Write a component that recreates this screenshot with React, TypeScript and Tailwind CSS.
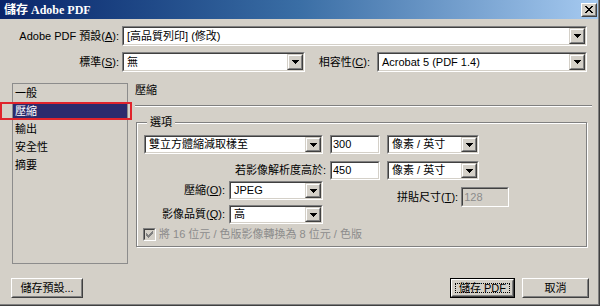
import React from "react";

const Arrow = () => (
  <svg width="7" height="4" viewBox="0 0 7 4" shapeRendering="crispEdges">
    <path d="M0 0h7v1h-1v1h-1v1h-1v1h-1v-1h-1v-1h-1v-1h-1z" fill="#000" />
  </svg>
);

const DropBtn = () => (
  <div className="w-[16px] h-full border border-t-[#d4d0c8] border-l-[#d4d0c8] border-b-[#404040] border-r-[#404040] shrink-0">
    <div className="w-full h-full border border-t-white border-l-white border-b-[#808080] border-r-[#808080] bg-[#d4d0c8] flex items-center justify-center">
      <Arrow />
    </div>
  </div>
);

const Sunken = ({
  className,
  children,
  disabled,
}: {
  className: string;
  children?: React.ReactNode;
  disabled?: boolean;
}) => (
  <div
    className={`${className} flex border border-t-[#808080] border-l-[#808080] border-b-white border-r-white shrink-0`}
  >
    <div
      className={`flex-1 min-w-0 flex border border-t-[#404040] border-l-[#404040] border-b-[#d4d0c8] border-r-[#d4d0c8] ${
        disabled ? "bg-[#d4d0c8]" : "bg-white"
      }`}
    >
      {children}
    </div>
  </div>
);

const Combo = ({ className, text }: { className: string; text: string }) => (
  <Sunken className={className}>
    <div className="flex-1 min-w-0 flex items-center pl-[3px] whitespace-nowrap overflow-hidden">
      {text}
    </div>
    <DropBtn />
  </Sunken>
);

const Input = ({
  className,
  text,
  disabled,
}: {
  className: string;
  text: string;
  disabled?: boolean;
}) => (
  <Sunken className={className} disabled={disabled}>
    <div
      className={`flex-1 flex items-center pl-[1px] ${
        disabled ? "text-[#8c8c8c]" : ""
      }`}
    >
      {text}
    </div>
  </Sunken>
);

const Btn = ({
  className,
  children,
  def,
}: {
  className: string;
  children: React.ReactNode;
  def?: boolean;
}) => (
  <div className={`${className} ${def ? "border border-black" : ""} flex shrink-0`}>
    <div className="flex-1 flex border border-t-white border-l-white border-b-[#404040] border-r-[#404040]">
      <div className="flex-1 flex border border-t-[#d4d0c8] border-l-[#d4d0c8] border-b-[#808080] border-r-[#808080] bg-[#d4d0c8] p-[2px]">
        <div
          className={`flex-1 flex items-center justify-center ${
            def ? "border border-dotted border-black" : ""
          }`}
        >
          {children}
        </div>
      </div>
    </div>
  </div>
);

const U = ({ c }: { c: string }) => <span className="underline">{c}</span>;

export default function App() {
  const items = ["一般", "壓縮", "輸出", "安全性", "摘要"];
  return (
    <div className="w-[600px] h-[306px] bg-[#d4d0c8] border-r border-b border-r-[#404040] border-b-[#404040] font-['Liberation_Sans','Noto_Sans_CJK_TC',sans-serif] text-[11px] text-black leading-none">
      <div className="w-full h-full border-r border-b border-r-[#808080] border-b-[#808080] flex flex-col">
        {/* Title bar */}
        <div className="h-[19px] w-full bg-linear-to-r from-[#0a246a] via-[#3a6ea5] to-[#a6caf0] flex items-center justify-between pl-[4px] pr-[1px]">
          <span className="text-white font-bold text-[12px] font-['Liberation_Serif','Noto_Sans_CJK_TC',serif] whitespace-nowrap">
            儲存 Adobe PDF
          </span>
          <div className="w-[16px] h-[14px] flex border border-t-white border-l-white border-b-[#404040] border-r-[#404040]">
            <div className="flex-1 flex items-center justify-center bg-[#d4d0c8] border border-t-[#d4d0c8] border-l-[#d4d0c8] border-b-[#808080] border-r-[#808080]">
              <svg width="8" height="7" viewBox="0 0 8 7" shapeRendering="crispEdges">
                <path
                  d="M0 0h2v1h1v1h2v-1h1v-1h2v1h-1v1h-1v1h-1v1h1v1h1v1h1v1h-2v-1h-1v-1h-2v1h-1v1h-2v-1h1v-1h1v-1h1v-1h-1v-1h-1v-1h-1z"
                  fill="#000"
                />
              </svg>
            </div>
          </div>
        </div>

        {/* Row 1 */}
        <div className="mt-[7px] flex items-center h-[20px]">
          <div className="w-[119px] text-right whitespace-nowrap">
            Adobe PDF 預設(<U c="A" />):
          </div>
          <Combo className="ml-[3px] w-[465px] h-[20px]" text="[高品質列印] (修改)" />
        </div>

        {/* Row 2 */}
        <div className="mt-[6px] flex items-center h-[20px]">
          <div className="w-[119px] text-right whitespace-nowrap">
            標準(<U c="S" />):
          </div>
          <Combo className="ml-[3px] w-[183px] h-[20px]" text="無" />
          <div className="w-[65px] text-right whitespace-nowrap">
            相容性(<U c="C" />):
          </div>
          <Combo className="ml-[7px] w-[210px] h-[20px]" text="Acrobat 5 (PDF 1.4)" />
        </div>

        {/* Main */}
        <div className="mt-[11px] flex">
          <div className="ml-[12px] w-[116px] h-[181px] border border-[#8c8c8c] relative flex flex-col">
            {items.map((it, i) => (
              <div
                key={it}
                className={`h-[18px] flex items-center pl-[2px] ${
                  i === 1 ? "bg-[#2b2b6d] text-white" : ""
                }`}
              >
                {it}
              </div>
            ))}
            <div className="absolute left-[-13px] top-[18px] w-[132px] h-[18px] border-2 border-[#e0242c]" />
          </div>

          <div className="ml-[7px] w-[457px] flex flex-col">
            <div className="h-[14px] flex items-center">壓縮</div>
            <div className="mt-[8px] h-[2px] border-t border-t-[#808080] border-b border-b-white" />
            <div className="mt-[15px] ml-[1px] w-[451px] h-[125px] relative border border-[#808080] shadow-[inset_1px_1px_0_#fff,1px_1px_0_#fff]">
              <div className="absolute left-[10px] top-[-7px] px-[3px] h-[13px] flex items-center bg-[#d4d0c8]">
                選項
              </div>
              <div className="pl-[7px] pt-[12px] flex flex-col">
                {/* Row A */}
                <div className="flex h-[19px]">
                  <Combo className="w-[179px] h-[19px]" text="雙立方體縮減取樣至" />
                  <Input className="ml-[7px] w-[50px] h-[19px]" text="300" />
                  <Combo className="ml-[7px] w-[92px] h-[19px]" text="像素 / 英寸" />
                </div>
                {/* Row B */}
                <div className="mt-[7px] flex items-center h-[19px]">
                  <div className="w-[182px] text-right whitespace-nowrap">若影像解析度高於:</div>
                  <Input className="ml-[4px] w-[50px] h-[19px]" text="450" />
                  <Combo className="ml-[7px] w-[92px] h-[19px]" text="像素 / 英寸" />
                </div>
                {/* Rows C & D */}
                <div className="mt-[1px] flex">
                  <div className="flex flex-col">
                    <div className="flex items-center h-[19px]">
                      <div className="w-[81px] text-right whitespace-nowrap">
                        壓縮(<U c="O" />):
                      </div>
                      <Combo className="ml-[4px] w-[94px] h-[19px]" text="JPEG" />
                    </div>
                    <div className="mt-[5px] flex items-center h-[19px]">
                      <div className="w-[81px] text-right whitespace-nowrap">
                        影像品質(<U c="Q" />):
                      </div>
                      <Combo className="ml-[4px] w-[94px] h-[19px]" text="高" />
                    </div>
                  </div>
                  <div className="ml-[74px] mt-[6px] flex items-center h-[20px]">
                    <div className="whitespace-nowrap">
                      拼貼尺寸(<U c="T" />):
                    </div>
                    <Input className="ml-[3px] w-[48px] h-[20px]" text="128" disabled />
                  </div>
                </div>
                {/* Checkbox */}
                <div className="mt-[4px] ml-[-1px] flex items-center h-[13px]">
                  <div className="w-[13px] h-[13px] flex border border-t-[#808080] border-l-[#808080] border-b-white border-r-white">
                    <div className="flex-1 flex items-center justify-center bg-[#d4d0c8] border border-t-[#404040] border-l-[#404040] border-b-[#d4d0c8] border-r-[#d4d0c8]">
                      <svg width="7" height="7" viewBox="0 0 7 7" shapeRendering="crispEdges">
                        <path d="M0 2h1v1h1v1h1v-1h1v-1h1v-1h1v-1h1v3h-1v1h-1v1h-1v1h-1v1h-1v-1h-1v-1h-1v-1h-1z" fill="#808080" />
                      </svg>
                    </div>
                  </div>
                  <div className="ml-[3px] text-[#8c8c8c] whitespace-nowrap">
                    將 16 位元 / 色版影像轉換為 8 位元 / 色版
                  </div>
                </div>
              </div>
            </div>
          </div>
        </div>

        {/* Bottom buttons */}
        <div className="mt-[14px] flex pr-[9px]">
          <Btn className="ml-[11px] w-[72px] h-[20px]">儲存預設...</Btn>
          <Btn className="ml-auto w-[65px] h-[20px]" def>
            儲存 PDF
          </Btn>
          <Btn className="ml-[7px] w-[67px] h-[20px]">取消</Btn>
        </div>
      </div>
    </div>
  );
}
